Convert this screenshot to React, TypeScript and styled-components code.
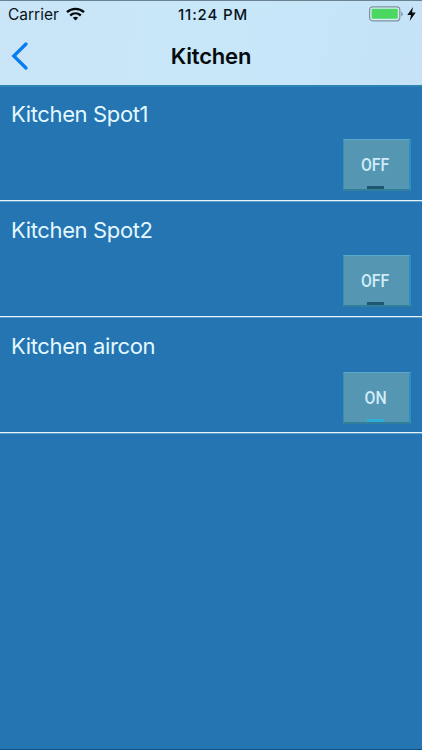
import React, { useState } from "react";
import styled, { createGlobalStyle } from "styled-components";

const GlobalStyle = createGlobalStyle`
  * { box-sizing: border-box; }
  body { margin: 0; background: #2475b1; }
`;

const Screen = styled.div`
  display: flex;
  flex-direction: column;
  height: 750px;
  width: 100%;
  overflow: hidden;
  background: #2475b1;
  border-bottom: 1px solid #07518c;
  font-family: Inter, "Liberation Sans", sans-serif;
`;

const Header = styled.header`
  height: 85px;
  flex: none;
  border-top: 1px solid #6b8290;
  background: linear-gradient(100deg, #c9e5f7 0%, #c7e7f9 60%, #c5e2f6 100%);
  color: #07131b;
`;

const StatusBar = styled.div`
  display: grid;
  grid-template-columns: 1fr auto 1fr;
  align-items: center;
  height: 27px;
  padding: 0 6px 0 8px;
`;

const Carrier = styled.div`
  display: flex;
  align-items: center;
  gap: 7px;
  font-size: 15.5px;
  line-height: 20px;
  letter-spacing: 0;

  svg {
    margin-top: -2px;
  }
`;

const Clock = styled.time`
  margin-left: 2px;
  font-size: 15px;
  font-weight: 550;
  line-height: 20px;
  letter-spacing: 0.85px;
`;

const Power = styled.div`
  display: flex;
  align-items: center;
  justify-content: flex-end;
  gap: 4px;

  svg {
    margin-top: -1px;
  }
`;

const NavBar = styled.nav`
  display: grid;
  grid-template-columns: 60px 1fr 60px;
  align-items: center;
  height: 55px;
`;

const BackButton = styled.button`
  display: flex;
  padding: 0 0 0 10px;
  border: 0;
  background: none;
`;

const Title = styled.h1`
  margin: 0;
  text-align: center;
  font-size: 22px;
  font-weight: 600;
  line-height: 28px;
  letter-spacing: -0.2px;
  color: #050a0e;
`;

const DeviceList = styled.ul`
  margin: 0;
  padding: 0;
  list-style: none;
  border-top: 2px solid #2d83b3;
`;

const DeviceRow = styled.li<{ $first: boolean; $drop: number }>`
  display: flex;
  flex-direction: column;
  height: ${(p) => (p.$first ? 114 : 116)}px;
  padding: ${(p) => (p.$first ? 12 : 14)}px 11px 0;
  border-bottom: 1px solid #e3f4fb;
  box-shadow: 0 1px 0 #5c9cc8;

  button {
    margin-top: ${(p) => p.$drop}px;
  }
`;

const DeviceName = styled.span`
  height: 30px;
  font-size: 22px;
  line-height: 30px;
  letter-spacing: -0.37px;
  color: #e3f8ff;
`;

const Toggle = styled.button<{ $on: boolean }>`
  display: flex;
  flex-direction: column;
  align-items: center;
  align-self: flex-end;
  width: 68px;
  height: 52px;
  padding: 0;
  border: solid;
  border-width: 1px 2px 2px 1px;
  border-color: #58a9cb #2c91c0 #327f9c #388db5;
  background: #5596b3;
  color: #d0ecf7;
  font-family: Roboto, sans-serif;
  font-size: 18px;
  font-weight: 500;
  line-height: 50px;

  &::after {
    content: "";
    width: 17px;
    height: 3px;
    margin: -4px 2px 0 0;
    background: ${(p) => (p.$on ? "#2caed8" : "#1d5870")};
  }
`;

const ToggleText = styled.span`
  height: 50px;
  margin-right: 2px;
  transform: scaleX(0.88);
`;

const WifiIcon = () => (
  <svg width="19" height="14" viewBox="0 0 19 14" fill="none" stroke="#05090c" strokeWidth="2.4">
    <path d="M1 5.2C5.8 0.7 13.2 0.7 18 5.2" />
    <path d="M4.2 8.5C7.3 5.7 11.7 5.7 14.8 8.5" />
    <path d="M9.5 13.4L6.8 10.7C8.3 9.4 10.7 9.4 12.2 10.7Z" fill="#05090c" stroke="none" />
  </svg>
);

const BatteryIcon = () => (
  <svg width="34" height="16" viewBox="0 0 34 16">
    <rect x="0.6" y="0.8" width="30.2" height="14" rx="3" fill="#d5eef4" stroke="#7d91a0" strokeWidth="1.2" />
    <rect x="2.6" y="2.8" width="26.2" height="10" rx="1" fill="#4cd763" />
    <path d="M32.2 5.5C34.1 6.2 34.1 9.6 32.2 10.3Z" fill="#7d91a0" />
  </svg>
);

const BoltIcon = () => (
  <svg width="9" height="14" viewBox="0 0 9 14">
    <path d="M6 0L0.3 8H4L2.7 14L8.7 5.6H5Z" fill="#05090c" />
  </svg>
);

const BackIcon = () => (
  <svg width="20" height="30" viewBox="0 0 20 30" fill="none" stroke="#087cf5" strokeWidth="3.3" strokeLinecap="round" strokeLinejoin="miter">
    <path d="M16 3L3.8 15L16 27" />
  </svg>
);

const devices = [
  { name: "Kitchen Spot1", on: false, drop: 10 },
  { name: "Kitchen Spot2", on: false, drop: 10 },
  { name: "Kitchen aircon", on: true, drop: 11 },
];

export default function App() {
  const [states, setStates] = useState(devices.map((d) => d.on));
  const flip = (index: number) => setStates((s) => s.map((on, i) => (i === index ? !on : on)));

  return (
    <Screen>
      <GlobalStyle />
      <Header>
        <StatusBar>
          <Carrier>Carrier <WifiIcon /></Carrier>
          <Clock>11:24 PM</Clock>
          <Power><BatteryIcon /><BoltIcon /></Power>
        </StatusBar>
        <NavBar>
          <BackButton aria-label="Back"><BackIcon /></BackButton>
          <Title>Kitchen</Title>
        </NavBar>
      </Header>
      <DeviceList>
        {devices.map((device, i) => (
          <DeviceRow key={device.name} $first={i === 0} $drop={device.drop}>
            <DeviceName>{device.name}</DeviceName>
            <Toggle $on={states[i]} onClick={() => flip(i)}>
              <ToggleText>{states[i] ? "ON" : "OFF"}</ToggleText>
            </Toggle>
          </DeviceRow>
        ))}
      </DeviceList>
    </Screen>
  );
}
